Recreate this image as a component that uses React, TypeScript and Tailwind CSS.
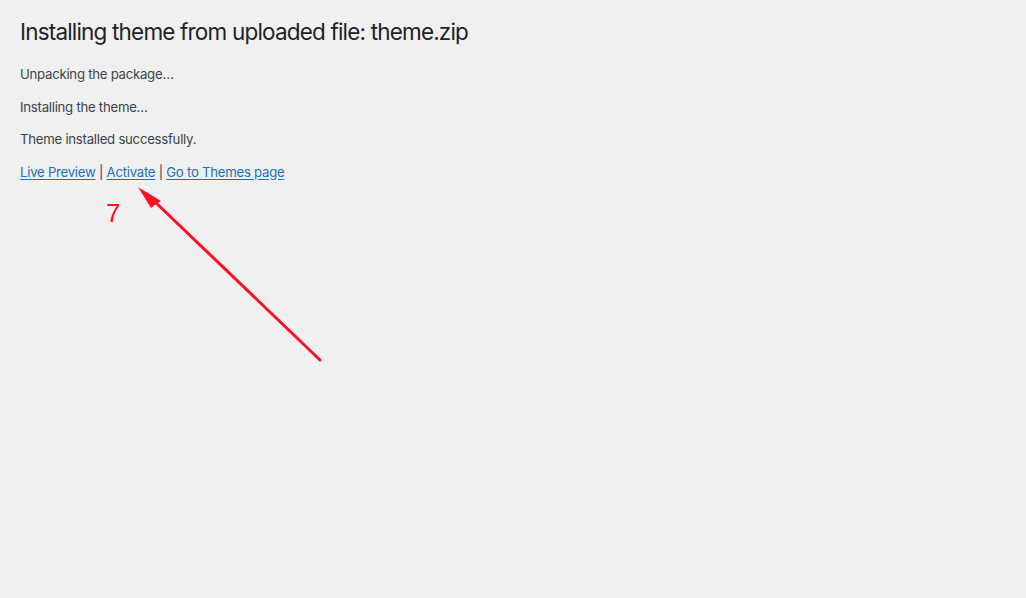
import React from "react";

export default function App() {
  return (
    <div className="relative w-[1026px] h-[598px] bg-[#f0f0f1] overflow-hidden" style={{ fontFamily: "Inter, 'Noto Sans', sans-serif" }}>
      <div className="pl-[20px] pt-[17px]">
        <h1 className="text-[22.5px] leading-[30px] text-[#1d2327] font-normal tracking-[-0.82px]">
          Installing theme from uploaded file: theme.zip
        </h1>
        <div className="mt-[17px] flex flex-col gap-[11.5px] text-[13.2px] leading-[21px] text-[#3c434a] tracking-[-0.26px]">
          <p>Unpacking the package…</p>
          <p>Installing the theme…</p>
          <p>Theme installed successfully.</p>
          <p>
            <a href="#" className="text-[#2271b1] underline underline-offset-2">Live Preview</a>
            {" | "}
            <a href="#" className="text-[#2271b1] underline underline-offset-2">Activate</a>
            {" | "}
            <a href="#" className="text-[#2271b1] underline underline-offset-2">Go to Themes page</a>
          </p>
        </div>
      </div>
      <div className="absolute left-[106px] top-[198px] text-[26px] leading-[30px] text-[#ff0f23]" style={{ fontFamily: "'Liberation Sans', sans-serif" }}>
        7
      </div>
      <svg className="absolute left-0 top-0" width="1026" height="598" viewBox="0 0 1026 598">
        <line x1="320" y1="360" x2="154" y2="201" stroke="#ff0f23" strokeWidth="3" strokeLinecap="round" />
        <polygon points="138,187 161,201 156,204 151,208" fill="#ff0f23" />
      </svg>
    </div>
  );
}
